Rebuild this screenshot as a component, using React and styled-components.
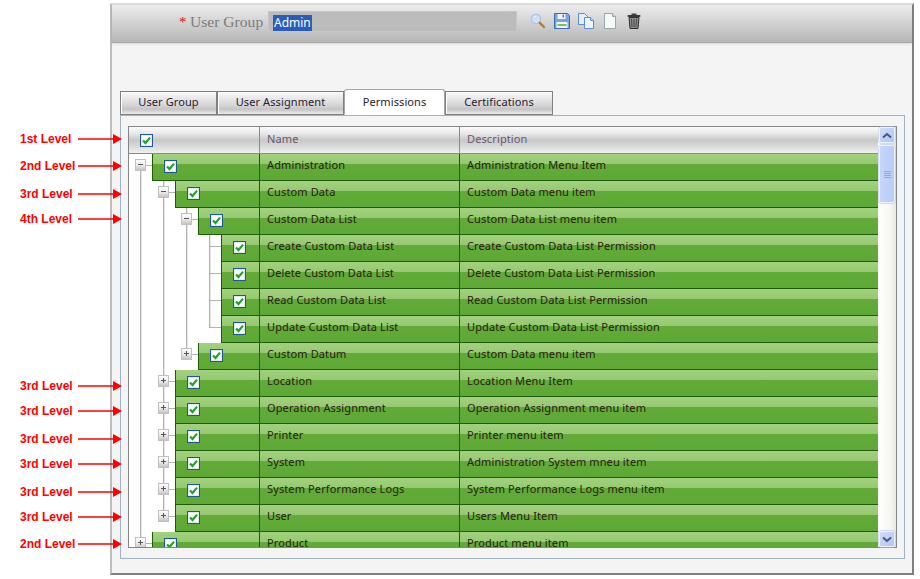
import styled, { createGlobalStyle } from "styled-components";

const GlobalStyle = createGlobalStyle`
  html, body {
    margin: 0;
    padding: 0;
    background: #fff;
  }
  * { box-sizing: border-box; }
`;

const GRID_FONT = `"Noto Sans", "Open Sans", sans-serif`;

const Page = styled.div`
  position: relative;
  display: flex;
  width: 920px;
  height: 579px;
  padding: 3px 0 0 110px;
  overflow: hidden;
`;

const Callout = styled.div`
  position: absolute;
  left: 20px;
  top: ${(p) => p.$y - 7}px;
  display: flex;
  align-items: center;
  height: 16px;
  font: bold 12px "Liberation Sans", Arial, sans-serif;
  color: #f00;
`;

const CalloutLabel = styled.span`
  width: 58px;
`;

const Window = styled.div`
  width: 804px;
  height: 572px;
  display: flex;
  flex-direction: column;
  background: #f4f4f4;
  border-style: solid;
  border-width: 2px;
  border-color: #dcdcdc #808080 #808080 #bdbdbd;
`;

const Header = styled.div`
  height: 38px;
  flex: none;
  display: flex;
  align-items: flex-start;
  padding: 6px 0 0 67px;
  background: linear-gradient(#ececec, #d4d4d4 45%, #b6b6b6);
  border-bottom: 1px solid #a8a8a8;
  box-shadow: 0 1px 2px rgba(0, 0, 0, 0.12);
`;

const Required = styled.span`
  font: 15px "Liberation Serif", serif;
  color: #e01010;
  width: 11px;
  line-height: 22px;
`;

const FieldLabel = styled.label`
  width: 78px;
  font: 15.6px "Liberation Serif", "Times New Roman", serif;
  color: #7c7c7c;
  line-height: 22px;
`;

const ValueBox = styled.div`
  width: 249px;
  height: 21px;
  padding: 1px 4px;
  background: #bcbcbc;
  border: 1px solid #c6c6c6;
`;

const Selected = styled.span`
  display: inline-block;
  height: 16px;
  padding: 0 1px;
  background: #2a5cbe;
  color: #fff;
  font: 12px/15px ${GRID_FONT};
`;

const Tools = styled.div`
  display: flex;
  gap: 8px;
  margin: 2px 0 0 13px;

  svg { display: block; }
`;

const TabBar = styled.div`
  display: flex;
  align-items: flex-end;
  height: 26px;
  margin: 46px 0 0 8px;
`;

const Tab = styled.div`
  width: ${(p) => p.$w}px;
  height: ${(p) => (p.$active ? 26 : 24)}px;
  padding-bottom: ${(p) => (p.$active ? 2 : 3)}px;
  display: flex;
  align-items: center;
  justify-content: center;
  font: 11px ${GRID_FONT};
  letter-spacing: 0.1px;
  color: #2a2030;
  background: ${(p) =>
    p.$active ? "#fff" : "linear-gradient(#fafafa, #d2d2d2 65%, #c4c4c4 78%, #eaeaea)"};
  border: 1px solid ${(p) => (p.$active ? "#a6a6a6" : "#808080")};
  border-bottom-color: ${(p) => (p.$active ? "#fff" : "#808080")};
  border-radius: ${(p) => (p.$active ? "3px 3px 0 0" : "0")};
  box-shadow: ${(p) => (p.$active ? "none" : "inset 1px 0 0 #fff")};
`;

const Panel = styled.div`
  width: 785px;
  height: 444px;
  margin-left: 8px;
  padding: 10px 7px 0 7px;
  border: 1px solid #9fb4c6;
`;

const Grid = styled.div`
  display: flex;
  width: 769px;
  height: 422px;
  background: #fff;
  border: 1px solid #858585;
`;

const Table = styled.div`
  flex: 1;
  min-width: 0;
  overflow: hidden;
`;

const HeaderRow = styled.div`
  display: flex;
  height: 27px;
  background: linear-gradient(#fbfbfb, #e8e8e8 25%, #c8c8c8 50%, #d2d2d2 65%, #f0f0f0);
  border-bottom: 1px solid #8a8a8a;
`;

const HeaderCell = styled.div`
  width: ${(p) => p.$w || "auto"};
  flex: ${(p) => (p.$w ? "none" : "1")};
  display: flex;
  align-items: center;
  padding: 0 0 ${(p) => p.$lift || 0}px ${(p) => p.$pad}px;
  font: 11px ${GRID_FONT};
  letter-spacing: 0.12px;
  color: #6b5670;
  border-right: ${(p) => (p.$w ? "1px solid #8a8a8a" : "none")};
`;

const Row = styled.div`
  display: flex;
  height: 27px;
  background: #fff;
`;

const TreeCell = styled.div`
  position: relative;
  width: 23px;
  flex: none;

  &::before {
    content: ${(p) => (p.$up || p.$down ? '""' : "none")};
    position: absolute;
    left: 11px;
    top: ${(p) => (p.$up ? 0 : 11)}px;
    bottom: ${(p) => (p.$down ? 0 : 15)}px;
    width: 1px;
    background: #b2b2b2;
    box-shadow: 1px 0 0 #e6e6e6;
  }

  &::after {
    content: ${(p) => (p.$stub ? '""' : "none")};
    position: absolute;
    left: 11px;
    right: 0;
    top: 11px;
    height: 1px;
    background: #b2b2b2;
  }
`;

const Expander = styled.span`
  position: absolute;
  z-index: 1;
  left: 6px;
  top: 5px;
  width: 11px;
  height: 12px;
  background: linear-gradient(#fff, #e8e8e8 55%, #c4c4c4);
  border: 1px solid #c0c0c0;

  &::before {
    content: "";
    position: absolute;
    left: 2px;
    top: 4px;
    width: 5px;
    height: 1px;
    background: #555;
  }

  &::after {
    content: ${(p) => (p.$open ? "none" : '""')};
    position: absolute;
    left: 4px;
    top: 2px;
    width: 1px;
    height: 5px;
    background: #555;
  }
`;

const Band = styled.div`
  flex: 1;
  min-width: 0;
  display: flex;
  border-left: 1px solid #1e5c0a;
  border-bottom: 1px solid #1e5c0a;
  background: linear-gradient(#a3d17f, #95c971 10px, #62ab38 10px, #5ea835);
`;

const CheckCell = styled.div`
  flex: 1;
  min-width: 0;
  padding: 6px 0 0 11px;
  border-right: 1px solid #1e5c0a;
`;

const NameCell = styled.div`
  width: 200px;
  flex: none;
  padding-left: 7px;
  font: 11px/22px ${GRID_FONT};
  letter-spacing: 0.12px;
  color: #2b1a14;
  white-space: nowrap;
  border-right: 1px solid #1e5c0a;
`;

const DescriptionCell = styled(NameCell)`
  width: 418px;
  border-right: none;
`;

const CheckBox = styled.span`
  display: block;
  width: 13px;
  height: 13px;
  background: #fff;
  border: 1px solid #22598c;
  box-shadow: inset 0 0 0 1px #dfe8f0;

  svg { display: block; }
`;

const ScrollBar = styled.div`
  width: 18px;
  flex: none;
  display: flex;
  flex-direction: column;
  align-items: center;
  background: linear-gradient(90deg, #fff, #f6f6f0 70%, #e8e8e4);
`;

const ScrollButton = styled.div`
  width: 16px;
  height: 16px;
  margin-top: ${(p) => (p.$bottom ? "auto" : "0")};
  display: flex;
  align-items: center;
  justify-content: center;
  background: linear-gradient(135deg, #d2def8, #aec4f2);
  border: 1px solid #eef3fc;
  border-radius: 2px;
  box-shadow: 0 0 0 0.5px #a8bce8;
`;

const ScrollThumb = styled.div`
  width: 16px;
  height: 58px;
  margin-top: 2px;
  display: flex;
  flex-direction: column;
  align-items: center;
  justify-content: center;
  gap: 1px;
  background: linear-gradient(90deg, #c6d6fa, #b8ccf8);
  border: 1px solid #eef3fc;
  border-radius: 2px;
  box-shadow: 0 0 0 0.5px #a8bce8;
`;

const Grip = styled.span`
  width: 7px;
  height: 1px;
  background: #8ea8e0;
`;

function Tick() {
  return (
    <svg width="11" height="11" viewBox="0 0 11 11">
      <path d="M2 5.4 L4.5 8 L9 2.6" fill="none" stroke="#22a02c" strokeWidth="2.2" />
    </svg>
  );
}

function Arrow() {
  return (
    <svg width="44" height="12" viewBox="0 0 44 12">
      <line x1="0" y1="6" x2="36" y2="6" stroke="#f00" strokeWidth="1.4" />
      <polygon points="35,1 44,6 35,11" fill="#f00" />
    </svg>
  );
}

function Chevron({ down }) {
  return (
    <svg width="10" height="7" viewBox="0 0 10 7">
      <path
        d={down ? "M1 1.5 L5 5 L9 1.5" : "M1 5.5 L5 2 L9 5.5"}
        fill="none"
        stroke="#44597f"
        strokeWidth="2"
      />
    </svg>
  );
}

function SearchIcon() {
  return (
    <svg width="16" height="16" viewBox="0 0 16 16">
      <circle cx="6" cy="6" r="4.7" fill="#cfe0f2" stroke="#a6c4e4" strokeWidth="1.2" />
      <path d="M3.5 4.5 A3 3 0 0 1 6 3" fill="none" stroke="#eef6fc" strokeWidth="1" />
      <path d="M9.8 9.8 L14 14" stroke="#b07a3c" strokeWidth="2.4" strokeLinecap="round" />
    </svg>
  );
}

function SaveIcon() {
  return (
    <svg width="16" height="16" viewBox="0 0 16 16">
      <path d="M0.5 0.5 H13.5 L15.5 2.5 V15.5 H0.5 Z" fill="#7ba4dc" stroke="#3a6cb4" />
      <rect x="3.5" y="1" width="8" height="5" fill="#eef4fc" />
      <rect x="8.5" y="1.5" width="1.5" height="3" fill="#4a7cc0" />
      <rect x="2.5" y="9" width="11" height="6" fill="#f0f4f8" />
      <rect x="3.5" y="11" width="9" height="2" fill="#7cc04c" />
    </svg>
  );
}

function CopyIcon() {
  return (
    <svg width="16" height="16" viewBox="0 0 16 16">
      <path d="M0.5 0.5 H6.5 L9.5 3.5 V11.5 H0.5 Z" fill="#e4eefa" stroke="#5c8cd0" />
      <path d="M6.5 4.5 H12.5 L15.5 7.5 V15.5 H6.5 Z" fill="#eef4fc" stroke="#5c8cd0" />
      <path d="M12.5 4.5 V7.5 H15.5" fill="#bcd4f0" stroke="#5c8cd0" />
    </svg>
  );
}

function PageIcon() {
  return (
    <svg width="16" height="16" viewBox="0 0 16 16">
      <path d="M2.5 0.5 H10.5 L13.5 3.5 V15.5 H2.5 Z" fill="#f6f9f8" stroke="#98a8a4" />
      <path d="M10.5 0.5 V3.5 H13.5" fill="#d0dcd8" stroke="#98a8a4" />
    </svg>
  );
}

function TrashIcon() {
  return (
    <svg width="16" height="16" viewBox="0 0 16 16">
      <rect x="5.5" y="0.5" width="5" height="1.5" fill="#444" />
      <rect x="1.5" y="2" width="13" height="2" rx="1" fill="#3a3a3a" />
      <path d="M3 4.5 H13 L12 15.5 H4 Z" fill="#8c8c8c" stroke="#303030" />
      <path d="M5.5 6 L6 14 M8 6 V14 M10.5 6 L10 14" stroke="#4a4a4a" />
    </svg>
  );
}

const CALLOUTS = [
  ["1st Level", 138],
  ["2nd Level", 165],
  ["3rd Level", 193],
  ["4th Level", 218],
  ["3rd Level", 385],
  ["3rd Level", 410],
  ["3rd Level", 438],
  ["3rd Level", 463],
  ["3rd Level", 491],
  ["3rd Level", 516],
  ["2nd Level", 543],
];

const PIPE = { up: true, down: true };
const branch = (kind, down = true, up = true) => ({ kind, up, down, stub: true });
const leaf = (down = true) => ({ up: true, down, stub: true });

const ROWS = [
  { cells: [branch("minus", true, false)], name: "Administration", desc: "Administration Menu Item" },
  { cells: [PIPE, branch("minus")], name: "Custom Data", desc: "Custom Data menu item" },
  { cells: [PIPE, PIPE, branch("minus")], name: "Custom Data List", desc: "Custom Data List menu item" },
  { cells: [PIPE, PIPE, PIPE, leaf()], name: "Create Custom Data List", desc: "Create Custom Data List Permission" },
  { cells: [PIPE, PIPE, PIPE, leaf()], name: "Delete Custom Data List", desc: "Delete Custom Data List Permission" },
  { cells: [PIPE, PIPE, PIPE, leaf()], name: "Read Custom Data List", desc: "Read Custom Data List Permission" },
  { cells: [PIPE, PIPE, PIPE, leaf(false)], name: "Update Custom Data List", desc: "Update Custom Data List Permission" },
  { cells: [PIPE, PIPE, branch("plus", false)], name: "Custom Datum", desc: "Custom Data menu item" },
  { cells: [PIPE, branch("plus")], name: "Location", desc: "Location Menu Item" },
  { cells: [PIPE, branch("plus")], name: "Operation Assignment", desc: "Operation Assignment menu item" },
  { cells: [PIPE, branch("plus")], name: "Printer", desc: "Printer menu item" },
  { cells: [PIPE, branch("plus")], name: "System", desc: "Administration System mneu item" },
  { cells: [PIPE, branch("plus")], name: "System Performance Logs", desc: "System Performance Logs menu item" },
  { cells: [PIPE, branch("plus", false)], name: "User", desc: "Users Menu Item" },
  { cells: [branch("plus", false)], name: "Product", desc: "Product menu item" },
];

export default function App() {
  return (
    <Page>
      <GlobalStyle />
      {CALLOUTS.map(([label, y]) => (
        <Callout key={y} $y={y}>
          <CalloutLabel>{label}</CalloutLabel>
          <Arrow />
        </Callout>
      ))}
      <Window>
        <Header>
          <Required>*</Required>
          <FieldLabel>User Group</FieldLabel>
          <ValueBox>
            <Selected>Admin</Selected>
          </ValueBox>
          <Tools>
            <SearchIcon />
            <SaveIcon />
            <CopyIcon />
            <PageIcon />
            <TrashIcon />
          </Tools>
        </Header>
        <TabBar>
          <Tab $w={97}>User Group</Tab>
          <Tab $w={127}>User Assignment</Tab>
          <Tab $w={101} $active>
            Permissions
          </Tab>
          <Tab $w={108}>Certifications</Tab>
        </TabBar>
        <Panel>
          <Grid>
            <Table>
              <HeaderRow>
                <HeaderCell $w="131px" $pad={11}>
                  <CheckBox>
                    <Tick />
                  </CheckBox>
                </HeaderCell>
                <HeaderCell $w="200px" $pad={7} $lift={3}>
                  Name
                </HeaderCell>
                <HeaderCell $pad={7} $lift={3}>
                  Description
                </HeaderCell>
              </HeaderRow>
              {ROWS.map((row) => (
                <Row key={row.name}>
                  {row.cells.map((cell, i) => (
                    <TreeCell key={i} $up={cell.up} $down={cell.down} $stub={cell.stub}>
                      {cell.kind && <Expander $open={cell.kind === "minus"} />}
                    </TreeCell>
                  ))}
                  <Band>
                    <CheckCell>
                      <CheckBox>
                        <Tick />
                      </CheckBox>
                    </CheckCell>
                    <NameCell>{row.name}</NameCell>
                    <DescriptionCell>{row.desc}</DescriptionCell>
                  </Band>
                </Row>
              ))}
            </Table>
            <ScrollBar>
              <ScrollButton>
                <Chevron />
              </ScrollButton>
              <ScrollThumb>
                <Grip />
                <Grip />
                <Grip />
                <Grip />
              </ScrollThumb>
              <ScrollButton $bottom>
                <Chevron down />
              </ScrollButton>
            </ScrollBar>
          </Grid>
        </Panel>
      </Window>
    </Page>
  );
}
